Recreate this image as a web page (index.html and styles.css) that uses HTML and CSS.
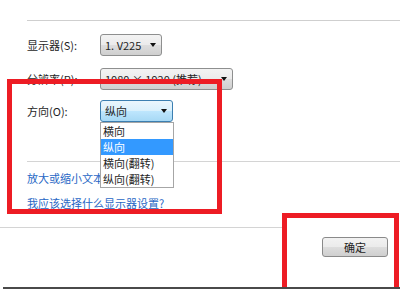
FILE: index.html
```html
<!DOCTYPE html>
<html lang="zh-CN">
<head>
    <meta charset="UTF-8">
    <meta name="viewport" content="width=device-width, initial-scale=1.0">
    <title>屏幕分辨率</title>
    <link rel="stylesheet" href="styles.css">
</head>
<body>
    <div class="page">
        <div class="rule-top"></div>

        <div class="row row-monitor">
            <span class="label">显示器(S):</span>
            <div class="combo combo-monitor">
                <span class="combo-text">1. V225</span>
                <span class="arrow"></span>
            </div>
        </div>

        <div class="row row-res">
            <span class="label">分辨率(R):</span>
            <div class="combo combo-res">
                <span class="combo-text">1080 × 1920 (推荐)</span>
                <span class="arrow"></span>
            </div>
        </div>

        <div class="row row-orient">
            <span class="label">方向(O):</span>
            <div class="combo combo-orient">
                <span class="combo-text">纵向</span>
                <span class="arrow"></span>
                <ul class="dropdown">
                    <li>横向</li>
                    <li class="selected">纵向</li>
                    <li>横向(翻转)</li>
                    <li>纵向(翻转)</li>
                </ul>
            </div>
        </div>

        <div class="rule-mid"></div>

        <a class="link link-first" href="#">放大或缩小文本和其他项目</a>
        <a class="link link-second" href="#">我应该选择什么显示器设置?</a>

        <div class="rule-bottom"></div>

        <div class="actions">
            <button class="btn">确定</button>
        </div>

        <div class="frame-edge"></div>
    </div>

    <div class="mark mark-left"></div>
    <div class="mark mark-right"></div>
</body>
</html>
```

FILE: styles.css
```css
* {
    margin: 0;
    padding: 0;
    box-sizing: border-box;
}

body {
    background: #fff;
    font-family: 'Noto Sans CJK SC', 'Noto Sans', sans-serif;
    font-size: 11px;
    color: #1e1e1e;
    width: 400px;
    height: 300px;
    overflow: hidden;
}

.page {
    padding-top: 20px;
}

.rule-top {
    margin-left: 27px;
    border-top: 1px solid #cfcfcf;
}

.row {
    display: flex;
    align-items: center;
    height: 22px;
    padding-left: 27px;
}

.row-monitor {
    margin-top: 13px;
}

.row-res {
    margin-top: 12px;
}

.row-orient {
    margin-top: 10px;
}

.label {
    width: 73px;
    line-height: 22px;
}

.combo {
    position: relative;
    display: flex;
    align-items: center;
    height: 22px;
    padding-left: 4px;
    border: 1px solid #8e8f8f;
    border-radius: 3px;
    background: linear-gradient(#f3f3f3, #ebebeb 50%, #dddddd 51%, #cfcfcf);
    line-height: 20px;
}

.combo-monitor {
    width: 62px;
}

.combo-res {
    width: 133px;
}

.combo-orient {
    width: 73px;
    border-color: #3c7fb1;
    background: linear-gradient(#eaf6fd, #d9f0fc 50%, #bee6fd 51%, #a7d9f5);
}

.combo-text {
    flex: 1;
    white-space: nowrap;
    overflow: hidden;
}

.arrow {
    width: 0;
    height: 0;
    margin-right: 5px;
    border-left: 3.5px solid transparent;
    border-right: 3.5px solid transparent;
    border-top: 4px solid #111;
}

.dropdown {
    position: absolute;
    top: 21px;
    left: -1px;
    width: 74px;
    list-style: none;
    background: #fff;
    border: 1px solid #a6a6a6;
    z-index: 2;
}

.dropdown li {
    height: 16px;
    line-height: 16px;
    padding-left: 2px;
    white-space: nowrap;
}

.dropdown .selected {
    background: #3399ff;
    color: #fff;
}

.rule-mid {
    margin-top: 39px;
    margin-left: 27px;
    border-top: 1px solid #d4d4d4;
}

.link {
    display: block;
    margin-left: 27px;
    line-height: 16px;
    color: #2867c5;
    text-decoration: none;
    white-space: nowrap;
}

.link-first {
    margin-top: 8px;
}

.link-second {
    margin-top: 9px;
}

.rule-bottom {
    margin-top: 16px;
    margin-right: 118px;
    border-top: 1px solid #d4d4d4;
}

.actions {
    display: flex;
    justify-content: flex-end;
    margin-top: 9px;
    padding-right: 12px;
}

.btn {
    width: 66px;
    height: 20px;
    font-family: inherit;
    font-size: 11px;
    color: #1e1e1e;
    border: 1px solid #8a8a8a;
    border-radius: 3px;
    background: linear-gradient(#f2f2f2, #ebebeb 50%, #dddddd 51%, #cfcfcf);
}

.frame-edge {
    margin-top: 30px;
    margin-left: 3px;
    border-top: 2px solid #4a4a4a;
}

.mark {
    position: absolute;
    border: 5px solid #ed1c24;
}

.mark-left {
    left: 7px;
    top: 79px;
    width: 215px;
    height: 135px;
}

.mark-right {
    left: 282px;
    top: 213px;
    width: 117px;
    height: 74px;
    border-bottom: none;
}
```
